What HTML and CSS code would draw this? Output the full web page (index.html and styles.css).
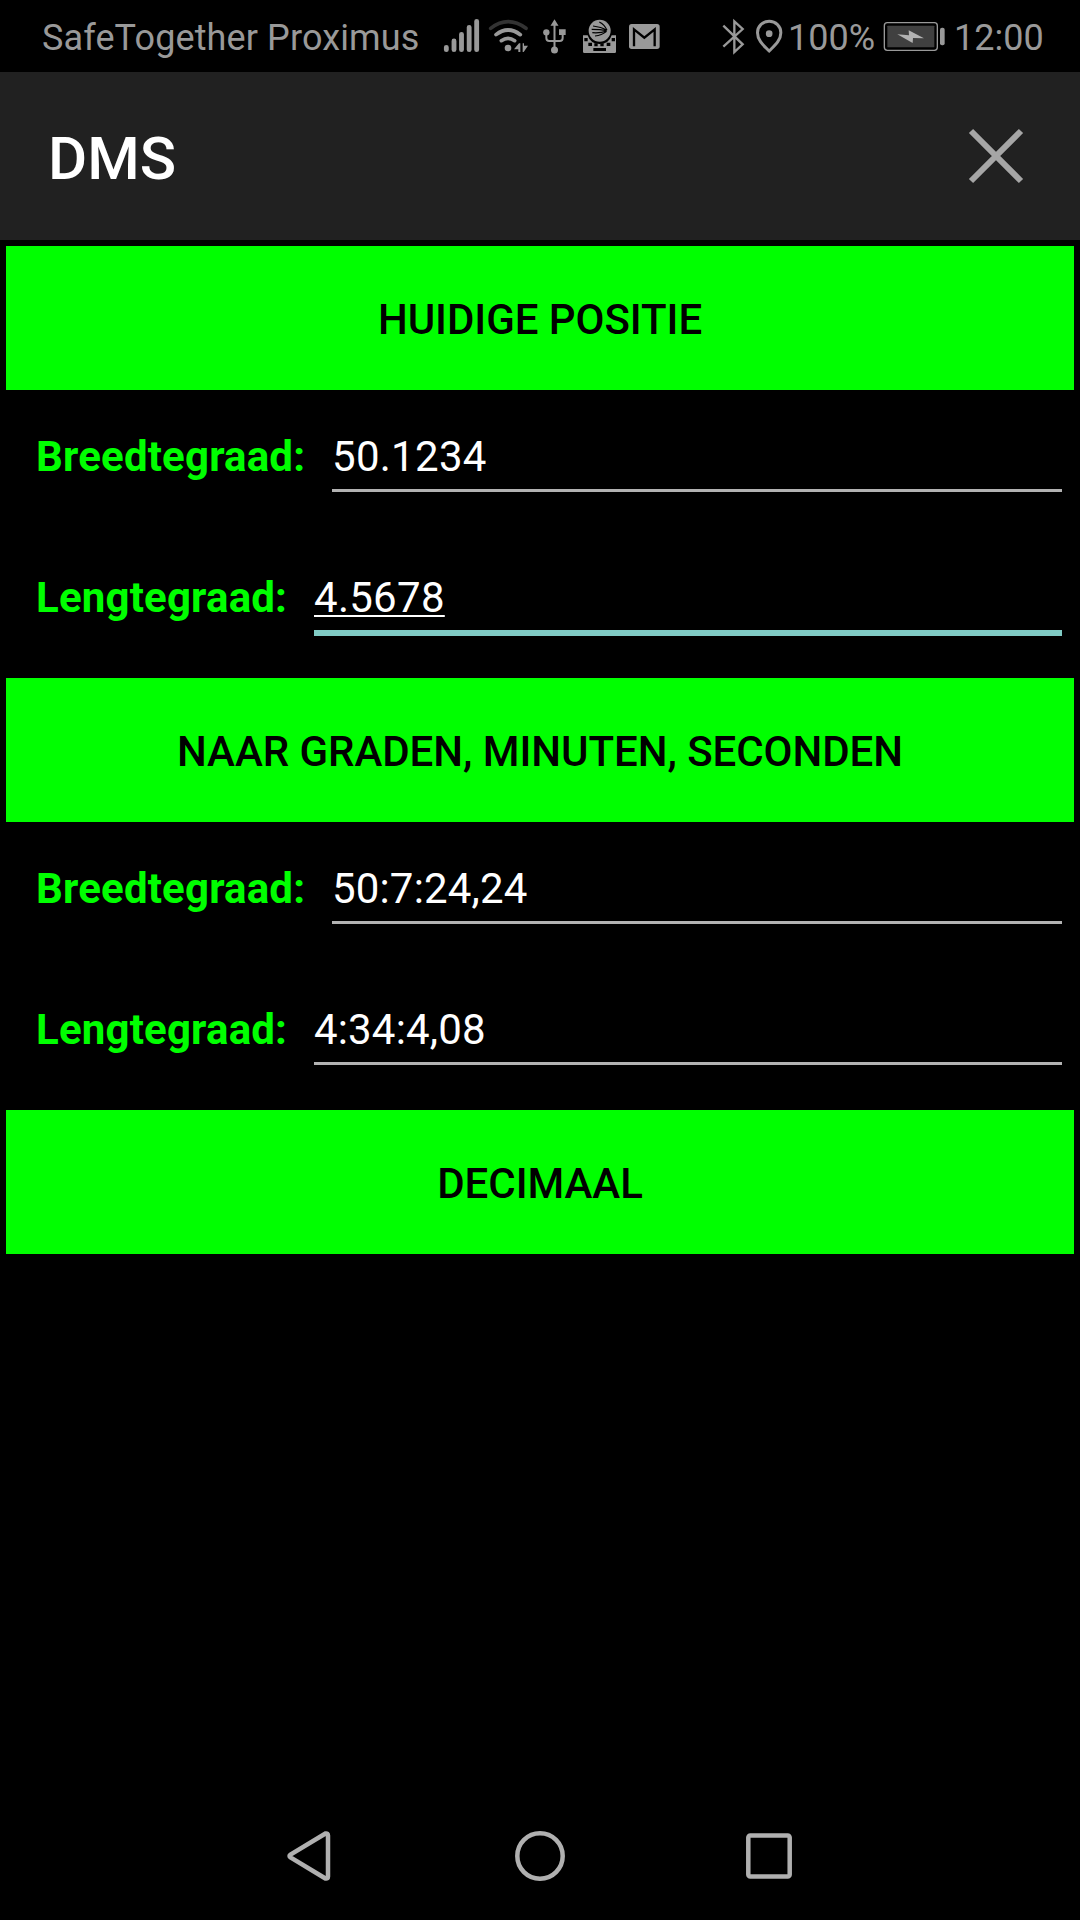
FILE: index.html
```html
<!DOCTYPE html>
<html lang="nl">
<head>
<meta charset="utf-8">
<title>DMS</title>
<link rel="stylesheet" href="styles.css">
</head>
<body>
<div class="screen">
  <div class="status">
    <span class="carrier">SafeTogether Proximus</span>
    <div class="notifications">
      <svg class="ic" width="40" height="55" viewBox="36 0 120 165"><path d="M49 112v7M72 93v26M94.500 73v46M117.500 52v67M140 34v85" stroke="#999" stroke-width="14.500" stroke-linecap="round" fill="none"/></svg>
      <svg class="ic" width="43" height="55" viewBox="171 0 129 165"><g fill="none" stroke-linecap="round" stroke-width="11"><path d="M182 55Q234 15 288 55" stroke="#333"/><path d="M198 74Q234 46 271 74M214 92Q234 78 254 92" stroke="#999"/></g><circle cx="234" cy="114" r="10" fill="#999"/><path d="M267 100h4v26h-6v-8h-13zM278 100h4v7h12l-13 19h-3z" fill="#999"/></svg>
      <svg class="ic" width="25" height="55" viewBox="336 0 75 165"><path d="M373.500 28l12 19h-24zM387 58h20v17h-20z" fill="#999"/><circle cx="349" cy="67" r="9.500" fill="#999"/><circle cx="373.500" cy="120" r="10.500" fill="#999"/><path d="M373.500 44v70M349 70v14q0 9 9 9h31q9 0 9-9V70" fill="none" stroke="#999" stroke-width="6"/></svg>
      <svg class="ic" width="35" height="55" viewBox="456 0 105 165"><path d="M459 76h14q8 26 36 26t36-26h13v49q0 4-4 4h-91q-4 0-4-4z" fill="#999"/><circle cx="509" cy="62" r="33" fill="#999"/><path d="M508 36q16 8 23 25M489 48q25 3 41 13M485 58q26 0 45 4M487 68q24 2 43-5M495 78q20-2 35-14" fill="none" stroke="#000" stroke-width="3.500"/><path d="M463 84h10v10h-10zM545 84h10v10h-10zM475 98h11v10h-11zM493 100h10v9h-10zM511 100h10v9h-10zM530 98h11v10h-11zM490 114h38v9h-38z" fill="#000"/></svg>
      <svg class="ic" width="33" height="55" viewBox="594 0 99 165"><rect x="597" y="42" width="92" height="75" rx="8" fill="#999"/><path d="M612 109V58l31 25 31-25v51" fill="none" stroke="#000" stroke-width="7"/></svg>
    </div>
    <div class="system">
      <svg class="ic" width="25" height="55" viewBox="63 0 75 165"><path d="M70 47l58 56-25 23V34l25 23-58 53" fill="none" stroke="#999" stroke-width="7" stroke-linejoin="miter"/></svg>
      <svg class="ic pin" width="30" height="55" viewBox="162 0 90 165"><path d="M207.500 34c-20 0-35 15-35 34 0 24 19 39 35 55 16-16 35-31 35-55 0-19-15-34-35-34z" fill="none" stroke="#999" stroke-width="9"/><circle cx="207.500" cy="71" r="10" fill="#999"/></svg>
      <span class="percent">100%</span>
      <svg class="ic battery" width="65" height="55" viewBox="546 0 195 165"><rect x="553" y="38" width="159" height="83" rx="9" fill="none" stroke="#999" stroke-width="4"/><rect x="562" y="47" width="141" height="65" rx="2" fill="#404040"/><path d="M592 73l35 3-1-15 46 24-33-1-1 15z" fill="#b2b2b2"/><rect x="720" y="53" width="14" height="53" rx="6" fill="#999"/></svg>
      <span class="clock">12:00</span>
    </div>
  </div>

  <header class="appbar">
    <h1 class="title">DMS</h1>
    <svg width="56" height="56" viewBox="0 0 56 56"><path d="M3 3l50 50M53 3L3 53" stroke="#a6a6a6" stroke-width="6"/></svg>
  </header>

  <main class="content">
    <div class="button">HUIDIGE POSITIE</div>
    <div class="fields">
      <div class="row"><span class="label">Breedtegraad:</span><div class="field lat">50.1234</div></div>
      <div class="row"><span class="label">Lengtegraad:</span><div class="field lon focused"><span class="composing">4.5678</span></div></div>
    </div>
    <div class="button">NAAR GRADEN, MINUTEN, SECONDEN</div>
    <div class="fields">
      <div class="row"><span class="label">Breedtegraad:</span><div class="field lat dms">50:7:24,24</div></div>
      <div class="row"><span class="label">Lengtegraad:</span><div class="field lon dms">4:34:4,08</div></div>
    </div>
    <div class="button">DECIMAAL</div>
  </main>

  <nav class="navbar">
    <svg width="50" height="54" viewBox="285 1829 50 54"><path d="M325.500 1833.500L290.500 1854.500Q288.500 1856 290.500 1857.500L325.500 1878.500Q328 1879 328 1876.500V1835.500Q328 1833 325.500 1833.500z"/></svg>
    <svg width="54" height="54" viewBox="0 0 54 54"><circle cx="27" cy="27" r="22.700"/></svg>
    <svg width="50" height="54" viewBox="744 1829 50 54"><rect x="748.300" y="1835.500" width="41.400" height="41" rx="2"/></svg>
  </nav>
</div>
</body>
</html>
```

FILE: styles.css
```css
* { box-sizing: border-box; }
body { margin: 0; background: #000; font-family: Roboto, "Liberation Sans", sans-serif; }
svg { display: block; flex: none; }
.screen { width: 1080px; height: 1920px; display: flex; flex-direction: column; background: #000; overflow: hidden; }

.status { height: 72px; display: flex; align-items: flex-start; padding-left: 42px; color: #999; font-size: 36px; line-height: 42px; white-space: nowrap; }
.carrier, .percent, .clock { padding-top: 17px; flex: none; }
.carrier { width: 400px; letter-spacing: 0.12px; }
.ic { margin-top: 10px; }
.notifications { display: grid; grid-template-columns: 45px 55px 40px 46px 33px; }
.system { display: flex; margin-left: 60px; }
.pin { margin-left: 8px; }
.percent { margin-left: 4px; width: 94px; }
.clock { margin-left: 7px; }

.appbar { height: 168px; background: #212121; display: flex; align-items: center; justify-content: space-between; padding: 0 56px 0 48px; }
.title { margin: 0; color: #fff; font-size: 60px; line-height: 70px; font-weight: 500; padding-top: 6px; }

.content { flex: 1; padding: 6px 6px 0; }
.button { height: 144px; background: #0f0; color: #000; display: flex; align-items: center; justify-content: center; font-size: 42px; line-height: 49px; font-weight: 500; letter-spacing: -0.05px; padding-top: 3px; white-space: nowrap; }
.fields { height: 288px; padding: 0 12px 0 30px; font-size: 42px; line-height: 49px; }
.row { height: 141px; padding-top: 42px; display: flex; align-items: flex-start; }
.label { color: #0f0; font-weight: 700; flex: none; letter-spacing: 0.18px; }
.lat { width: 730px; }
.lon { width: 748px; }
.field { margin-left: auto; color: #fff; height: 60px; border-bottom: 3px solid #b2b2b2; letter-spacing: 0.28px; }
.dms { letter-spacing: 0.16px; }
.focused { height: 63px; border-bottom: 6px solid #80cbc4; }
.composing { text-decoration: underline; text-decoration-thickness: 2px; text-underline-offset: 3px; text-decoration-skip-ink: none; }

.navbar { height: 128px; display: flex; justify-content: space-between; padding: 37px 286px 0 285px; }
.navbar path, .navbar circle, .navbar rect { fill: none; stroke: #b0b0b0; stroke-width: 4.5px; }
```
